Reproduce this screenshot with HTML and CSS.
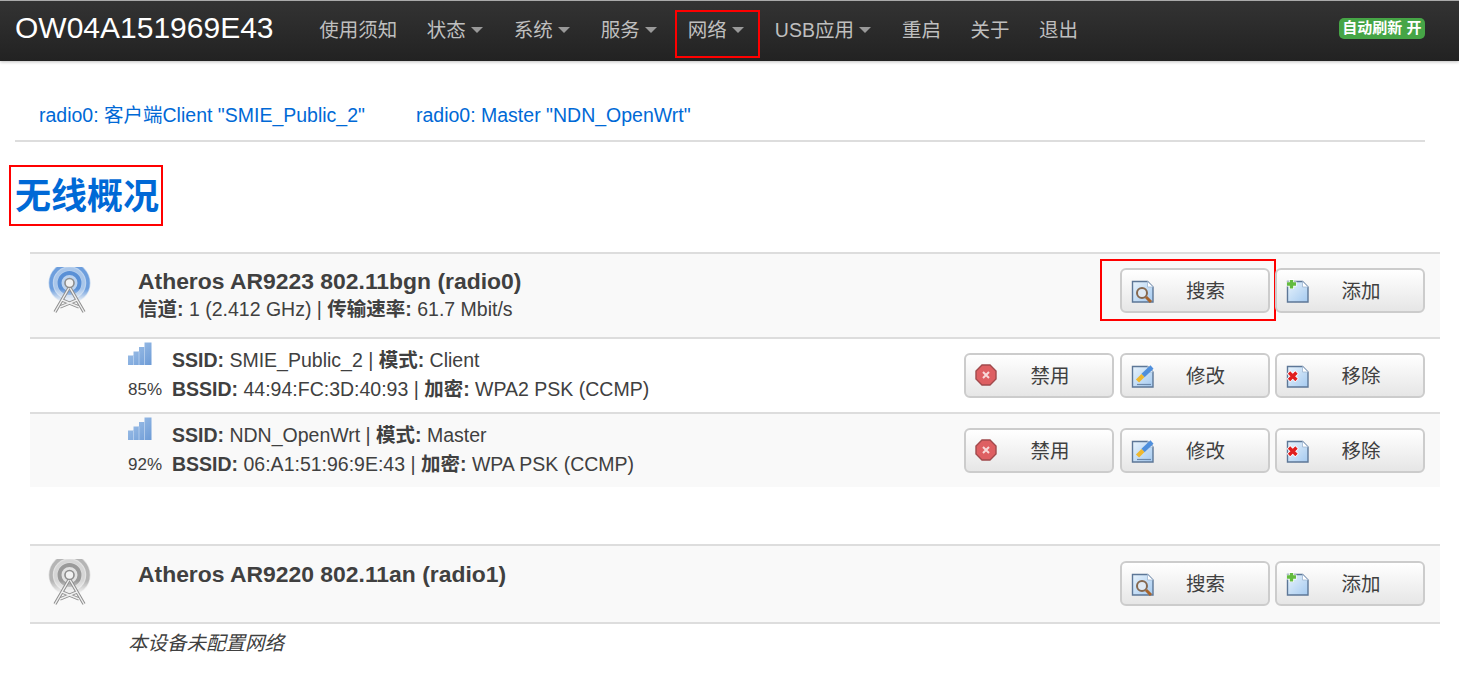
FILE: index.html
```html
<!DOCTYPE html>
<html lang="zh">
<head>
<meta charset="utf-8">
<title>无线概况</title>
<link rel="stylesheet" href="styles.css">
</head>
<body>
<svg class="defs" width="0" height="0" aria-hidden="true">
  <defs>
    <linearGradient id="page" x1="0" y1="0" x2="1" y2="1"><stop offset="0" stop-color="#e8f3fc"/><stop offset="1" stop-color="#a5caf0"/></linearGradient>
    <linearGradient id="fade" x1="0" y1="0" x2="0" y2="1"><stop offset=".55" stop-color="#fff"/><stop offset=".88" stop-color="#000"/></linearGradient>
    <mask id="haloMask" maskUnits="userSpaceOnUse" x="0" y="0" width="48" height="48"><rect width="48" height="40" fill="url(#fade)"/></mask>
    <linearGradient id="bar" x1="0" y1="0" x2="1" y2="1"><stop offset="0" stop-color="#a5c5ea"/><stop offset="1" stop-color="#6d9bd6"/></linearGradient>
    <symbol id="doc" viewBox="0 0 24 24">
      <path d="M1.500 2.500H16.500L22 8V23H1.500Z" fill="url(#page)" stroke="#5d7797" stroke-width="1.400"/>
      <path d="M16.500 2.500V8H22Z" fill="#fff" stroke="#9fb6d0" stroke-width=".8"/>
    </symbol>
    <symbol id="tower" viewBox="0 0 48 48">
      <path d="M23.500 20L9 45M23.500 20L38 45M16 33L33 40M31 33L14 40" fill="none" stroke="#8f8f8f" stroke-width="3.400"/>
      <path d="M23.500 20L9 45M23.500 20L38 45M16 33L33 40M31 33L14 40" fill="none" stroke="#f0f0f0" stroke-width="1.400"/>
      <circle cx="23.500" cy="16" r="4.500" fill="#f1f1f1" stroke="#8e8e8e" stroke-width="1.600"/>
    </symbol>
    <symbol id="halo-blue" viewBox="0 0 48 48">
      <g mask="url(#haloMask)" fill="none">
        <circle cx="23.500" cy="16" r="21" fill="#bcd3ef"/>
        <circle cx="23.500" cy="16" r="18.500" stroke="#6d9edd" stroke-width="3.500"/>
        <circle cx="23.500" cy="16" r="14" stroke="#a9c6ea" stroke-width="3"/>
        <circle cx="23.500" cy="16" r="10" stroke="#5a90d6" stroke-width="4"/>
        <circle cx="23.500" cy="16" r="5" fill="#9dbde6"/>
      </g>
    </symbol>
    <symbol id="halo-grey" viewBox="0 0 48 48">
      <g mask="url(#haloMask)" fill="none">
        <circle cx="23.500" cy="16" r="21" fill="#e2e2e2"/>
        <circle cx="23.500" cy="16" r="18.500" stroke="#b5b5b5" stroke-width="3.500"/>
        <circle cx="23.500" cy="16" r="14" stroke="#d6d6d6" stroke-width="3"/>
        <circle cx="23.500" cy="16" r="10" stroke="#9a9a9a" stroke-width="4"/>
        <circle cx="23.500" cy="16" r="5" fill="#c2c2c2"/>
      </g>
    </symbol>
    <symbol id="i-search" viewBox="0 0 24 24">
      <use href="#doc" width="24" height="24"/>
      <circle cx="11" cy="14" r="5" fill="#dfe9f3" stroke="#85684f" stroke-width="2"/>
      <path d="M15 18L20 23" stroke="#a8642c" stroke-width="3"/>
    </symbol>
    <symbol id="i-add" viewBox="0 0 24 24">
      <use href="#doc" width="24" height="24"/>
      <path d="M5.500 0V10M.5 5H10.500" stroke="#fff" stroke-width="5"/>
      <path d="M5.500 1V9.500M1 5H10" stroke="#63bb3f" stroke-width="3.400"/>
    </symbol>
    <symbol id="i-off" viewBox="0 0 24 24">
      <path d="M7 1H15L21 7V15L15 21H7L1 15V7Z" fill="#de5f62" stroke="#a04a4c" stroke-width="1.400"/>
      <path d="M8 8L14 14M14 8L8 14" stroke="#f8d8d8" stroke-width="2"/>
    </symbol>
    <symbol id="i-edit" viewBox="0 0 24 24">
      <use href="#doc" width="24" height="24"/>
      <path d="M12 11.500L21 3" stroke="#4f8fdc" stroke-width="4.500"/>
      <path d="M6.500 17L12 11.500" stroke="#efb82e" stroke-width="4.500"/>
      <path d="M6 20.500H20" stroke="#6c89ac" stroke-width="1.200"/>
    </symbol>
    <symbol id="i-del" viewBox="0 0 24 24">
      <use href="#doc" width="24" height="24"/>
      <path d="M2.500 8L11 16.500M11 8L2.500 16.500" stroke="#fff" stroke-width="5"/>
      <path d="M3 8.500L10.500 16M10.500 8.500L3 16" stroke="#e01f1f" stroke-width="3.400"/>
    </symbol>
    <symbol id="i-bars" viewBox="0 0 24 24">
      <path d="M0 23V13.500H5.500V9.500H11V5H16.500V.5H23.500V23Z" fill="url(#bar)"/>
      <path d="M5.500 13.500V23M11 9.500V23M16.500 5V23" stroke="#bcd3ef" stroke-width=".8"/>
    </symbol>
  </defs>
</svg>

<header class="navbar">
  <a class="brand">OW04A151969E43</a>
  <ul class="nav">
    <li><a>使用须知</a></li>
    <li class="drop"><a>状态</a></li>
    <li class="drop"><a>系统</a></li>
    <li class="drop"><a>服务</a></li>
    <li class="drop marked"><a>网络</a></li>
    <li class="drop"><a>USB应用</a></li>
    <li><a>重启</a></li>
    <li><a>关于</a></li>
    <li><a>退出</a></li>
  </ul>
  <span class="badge">自动刷新 开</span>
</header>

<main class="page">
  <ul class="tabs">
    <li><a>radio0: 客户端Client "SMIE_Public_2"</a></li>
    <li><a>radio0: Master "NDN_OpenWrt"</a></li>
  </ul>

  <h2 class="title">无线概况</h2>

  <section class="device">
    <div class="row head">
      <svg class="wifi" viewBox="0 0 48 48"><use href="#halo-blue" width="48" height="48"/><use href="#tower" width="48" height="48"/></svg>
      <div class="info">
        <div class="name">Atheros AR9223 802.11bgn (radio0)</div>
        <div class="sub"><b>信道:</b> 1 (2.412 GHz) | <b>传输速率:</b> 61.7 Mbit/s</div>
      </div>
      <div class="actions">
        <button class="btn marked-btn"><svg class="ic"><use href="#i-search"/></svg>搜索</button>
        <button class="btn"><svg class="ic"><use href="#i-add"/></svg>添加</button>
      </div>
    </div>
    <div class="row net">
      <div class="signal"><svg class="bars"><use href="#i-bars"/></svg><span class="pct">85%</span></div>
      <div class="info">
        <div><b>SSID:</b> SMIE_Public_2 | <b>模式:</b> Client</div>
        <div><b>BSSID:</b> 44:94:FC:3D:40:93 | <b>加密:</b> WPA2 PSK (CCMP)</div>
      </div>
      <div class="actions">
        <button class="btn"><svg class="ic"><use href="#i-off"/></svg>禁用</button>
        <button class="btn"><svg class="ic"><use href="#i-edit"/></svg>修改</button>
        <button class="btn"><svg class="ic"><use href="#i-del"/></svg>移除</button>
      </div>
    </div>
    <div class="row net alt">
      <div class="signal"><svg class="bars"><use href="#i-bars"/></svg><span class="pct">92%</span></div>
      <div class="info">
        <div><b>SSID:</b> NDN_OpenWrt | <b>模式:</b> Master</div>
        <div><b>BSSID:</b> 06:A1:51:96:9E:43 | <b>加密:</b> WPA PSK (CCMP)</div>
      </div>
      <div class="actions">
        <button class="btn"><svg class="ic"><use href="#i-off"/></svg>禁用</button>
        <button class="btn"><svg class="ic"><use href="#i-edit"/></svg>修改</button>
        <button class="btn"><svg class="ic"><use href="#i-del"/></svg>移除</button>
      </div>
    </div>
  </section>

  <section class="device second">
    <div class="row head">
      <svg class="wifi" viewBox="0 0 48 48"><use href="#halo-grey" width="48" height="48"/><use href="#tower" width="48" height="48"/></svg>
      <div class="info">
        <div class="name">Atheros AR9220 802.11an (radio1)</div>
      </div>
      <div class="actions">
        <button class="btn"><svg class="ic"><use href="#i-search"/></svg>搜索</button>
        <button class="btn"><svg class="ic"><use href="#i-add"/></svg>添加</button>
      </div>
    </div>
    <p class="empty">本设备未配置网络</p>
  </section>
</main>
</body>
</html>
```

FILE: styles.css
```css
* { box-sizing: border-box; }
html, body { margin: 0; padding: 0; }
body {
  font-family: "Liberation Sans", "Noto Sans CJK SC", sans-serif;
  font-size: 19.5px;
  color: #404040;
  background: #fff;
  overflow: hidden;
}
.defs { position: absolute; }
ul { list-style: none; margin: 0; padding: 0; }

.navbar {
  display: flex;
  align-items: flex-start;
  height: 61px;
  padding: 0 34px 0 15px;
  background: linear-gradient(#333, #222);
  border-top: 1px solid #aaa;
  box-shadow: 0 1px 3px rgba(0,0,0,.25);
}
.brand { font-size: 30px; line-height: 54px; color: #fff; width: 289.5px; }
.nav { display: flex; flex: 1; margin-top: 9px; }
.nav li { position: relative; height: 48px; padding: 0 14.75px; color: #bfbfbf; line-height: 40px; white-space: nowrap; }
.nav .drop { padding-right: 33.25px; }
.nav .drop::after {
  content: "";
  position: absolute;
  right: 16.5px;
  top: 17px;
  border: 6px solid transparent;
  border-top-color: #999;
  border-bottom: 0;
}
.nav .marked::before {
  content: "";
  position: absolute;
  left: 2px;
  right: 0;
  top: 0;
  bottom: 0;
  border: 2px solid #f00;
}
.badge {
  margin-top: 17px;
  padding: 0 3.5px;
  height: 21px;
  line-height: 20px;
  border-radius: 5px;
  background: #46a546;
  color: #fff;
  font-size: 15px;
  font-weight: bold;
  white-space: nowrap;
}

.page { padding: 0 34px 0 15px; }
.tabs {
  display: flex;
  gap: 51px;
  height: 81px;
  padding: 37px 0 0 24px;
  border-bottom: 2px solid #ddd;
  color: #0069d6;
}
.tabs li { line-height: 34px; }
.title {
  display: inline-block;
  position: relative;
  margin: 24px 0 0;
  font-size: 36px;
  line-height: 62px;
  font-weight: bold;
  color: #0069d6;
}
.title::after {
  content: "";
  position: absolute;
  left: -6px;
  right: -4px;
  top: -1px;
  bottom: 2px;
  border: 2px solid #f00;
}

.device { margin: 24px -15px 0 15px; }
.device.second { margin-top: 57px; }
.row { display: flex; border-top: 2px solid #ddd; }
.row.head { background: #f9f9f9; height: 85px; }
.row.net { height: 75px; }
.second .row.head { height: 80px; border-bottom: 2px solid #ddd; }
.row.alt { background: #f9f9f9; }

.wifi { width: 48px; height: 48px; margin: 13px 44px 0 16px; flex: none; filter: blur(.6px); }
.info { flex: 1; line-height: 29px; }
.head .info { padding-top: 13px; line-height: 28px; }
.second .head .info { padding-top: 14px; }
.net .info { padding-top: 7px; }
.name { font-weight: bold; font-size: 22.9px; }
.sub { font-size: 19.5px; }

.signal { width: 44px; margin-left: 98px; padding-top: 3px; flex: none; }
.bars { display: block; width: 24px; height: 24px; margin-bottom: 9px; filter: blur(.4px); }
.pct { display: block; font-size: 17px; line-height: 29px; }

.actions { display: flex; gap: 5.5px; padding: 14px 15px 0 0; }
.second .actions { padding-top: 15px; }
.btn {
  position: relative;
  display: flex;
  align-items: center;
  justify-content: center;
  width: 150px;
  height: 45px;
  padding: 0 0 2px 22px;
  border: 2px solid #ccc;
  border-radius: 6px;
  background: linear-gradient(#fff, #e6e6e6);
  font: inherit;
  color: #404040;
}
.ic { position: absolute; left: 9px; top: 9px; width: 24px; height: 24px; filter: blur(.3px); }
.marked-btn::after {
  content: "";
  position: absolute;
  left: -22px;
  right: -8px;
  top: -11px;
  bottom: -10px;
  border: 2px solid #f00;
}
.empty { margin: 5px 0 0 98px; font-style: italic; line-height: 29px; }
```
